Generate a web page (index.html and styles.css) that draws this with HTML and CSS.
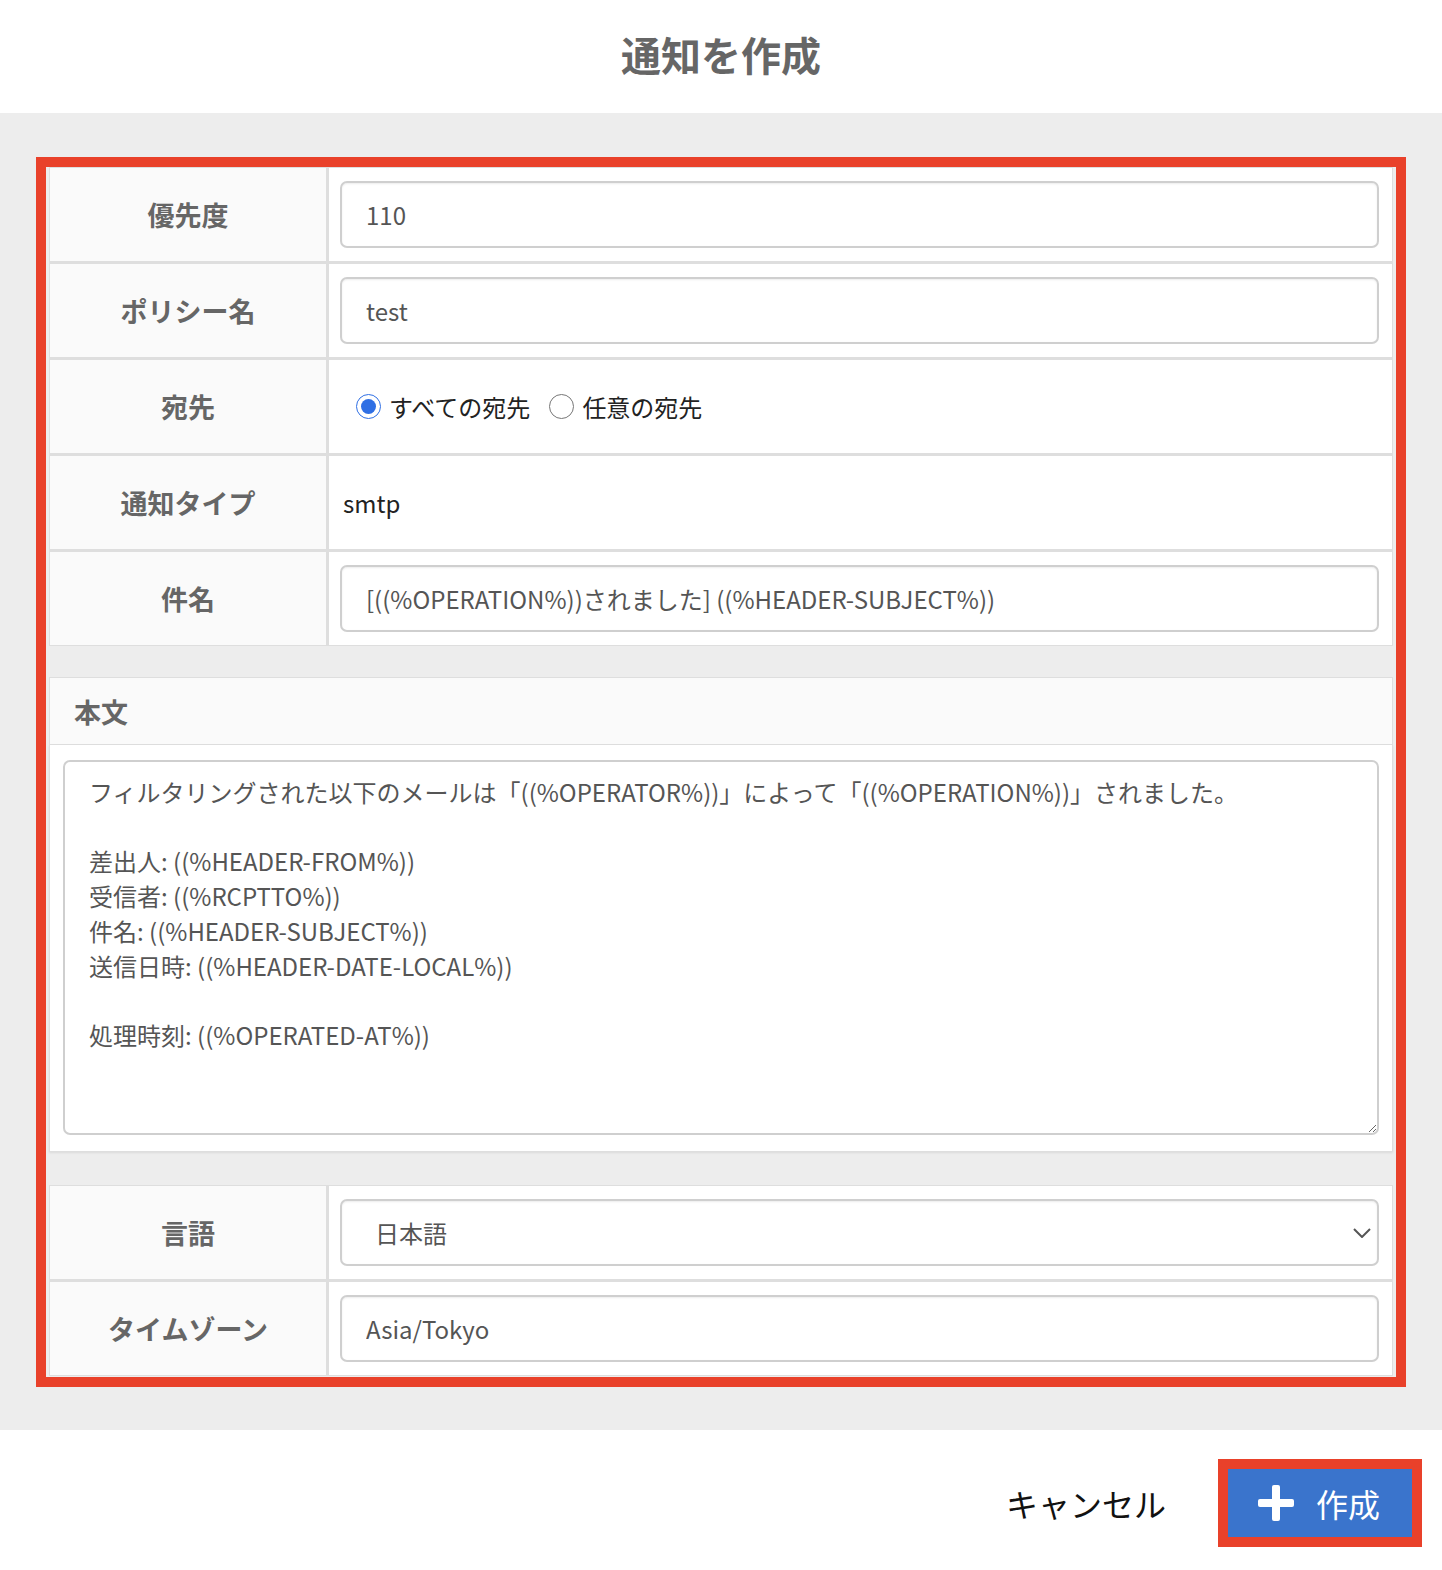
FILE: index.html
```html
<!DOCTYPE html>
<html lang="ja">
<head>
    <meta charset="UTF-8">
    <meta name="viewport" content="width=device-width, initial-scale=1.0">
    <title>通知を作成</title>
    <link rel="stylesheet" href="styles.css">
</head>
<body>
    <header class="top">
        <h1>通知を作成</h1>
    </header>

    <main class="sheet">
        <div class="frame">
            <div class="grid">
                <div class="label">優先度</div>
                <div class="value"><input class="field" type="text" value="110"></div>

                <div class="label">ポリシー名</div>
                <div class="value"><input class="field" type="text" value="test"></div>

                <div class="label">宛先</div>
                <div class="value">
                    <div class="radios">
                        <label class="radio"><input type="radio" name="dest" checked> すべての宛先</label>
                        <label class="radio"><input type="radio" name="dest"> 任意の宛先</label>
                    </div>
                </div>

                <div class="label">通知タイプ</div>
                <div class="value"><span class="plain">smtp</span></div>

                <div class="label">件名</div>
                <div class="value"><input class="field" type="text" value="[((%OPERATION%))されました] ((%HEADER-SUBJECT%))"></div>
            </div>

            <div class="body-head">本文</div>
            <div class="body-main">
                <textarea class="text">フィルタリングされた以下のメールは「((%OPERATOR%))」によって「((%OPERATION%))」されました。

差出人: ((%HEADER-FROM%))
受信者: ((%RCPTTO%))
件名: ((%HEADER-SUBJECT%))
送信日時: ((%HEADER-DATE-LOCAL%))

処理時刻: ((%OPERATED-AT%))</textarea>
            </div>

            <div class="grid">
                <div class="label">言語</div>
                <div class="value">
                    <div class="select-wrap">
                        <select class="field select">
                            <option>日本語</option>
                            <option>English</option>
                        </select>
                        <svg class="chevron" width="18" height="10" viewBox="0 0 18 10">
                            <path d="M1 1 L9 9 L17 1" fill="none" stroke="#555" stroke-width="2"/>
                        </svg>
                    </div>
                </div>

                <div class="label">タイムゾーン</div>
                <div class="value"><input class="field" type="text" value="Asia/Tokyo"></div>
            </div>
        </div>
    </main>

    <footer class="actions">
        <a class="cancel" href="#">キャンセル</a>
        <div class="btn-frame">
            <button class="btn" type="button">
                <svg width="36" height="36" viewBox="0 0 36 36">
                    <rect x="14" y="0" width="8" height="36" rx="2" fill="#fff"/>
                    <rect x="0" y="14" width="36" height="8" rx="2" fill="#fff"/>
                </svg>
                作成
            </button>
        </div>
    </footer>
</body>
</html>
```

FILE: styles.css
```css
body{
    margin: 0;
    background: #fff;
    font-family: "Noto Sans CJK JP", "Noto Sans", sans-serif;
    color: #222;
}

.top{
    height: 113px;
    display: flex;
    align-items: center;
    justify-content: center;
    padding-bottom: 6px;
    box-sizing: border-box;
}

h1{
    margin: 0;
    font-size: 40px;
    font-weight: bold;
    color: #666;
}

.sheet{
    background: #ededed;
    padding: 44px 36px 43px;
}

.frame{
    border: 10px solid #e9412a;
    padding: 0 3px 1px;
}

.grid{
    display: grid;
    grid-template-columns: 276px 1fr;
    grid-auto-rows: 93px;
    gap: 3px;
    padding: 1px;
    background: #dedede;
}

.label{
    background: #fafafa;
    display: flex;
    align-items: center;
    justify-content: center;
    font-size: 27px;
    font-weight: bold;
    color: #666;
}

.value{
    background: #fff;
    display: flex;
    align-items: center;
    padding: 0 13px 0 11px;
}

.field{
    width: 100%;
    height: 67px;
    box-sizing: border-box;
    border: 2px solid #cfcfcf;
    border-radius: 7px;
    box-shadow: inset 0 1px 2px rgba(0, 0, 0, 0.08);
    padding: 0 24px;
    font-family: inherit;
    font-size: 24px;
    color: #555;
    background: #fff;
}

.plain{
    font-size: 24px;
    color: #222;
    padding-left: 3px;
}

.radios{
    display: flex;
    gap: 19px;
    padding-left: 16px;
}

.radio{
    display: flex;
    align-items: center;
    gap: 8px;
    font-size: 24px;
    color: #222;
}

.radio input{
    width: 25px;
    height: 25px;
    margin: 0;
    accent-color: #2f6fe4;
}

.body-head{
    margin-top: 31px;
    height: 68px;
    box-sizing: border-box;
    border: 1px solid #dedede;
    background: #fafafa;
    display: flex;
    align-items: center;
    padding-left: 24px;
    font-size: 27px;
    font-weight: bold;
    color: #666;
}

.body-main{
    background: #fff;
    border: 1px solid #dedede;
    border-top: none;
    padding: 15px 13px 16px 13px;
    margin-bottom: 33px;
    box-shadow: 0 1px 2px rgba(0, 0, 0, 0.08);
}

.text{
    display: block;
    width: 100%;
    height: 375px;
    box-sizing: border-box;
    border: 2px solid #cfcfcf;
    border-radius: 7px;
    padding: 13px 24px;
    font-family: inherit;
    font-size: 24px;
    line-height: 34.7px;
    color: #555;
}

.select-wrap{
    position: relative;
    width: 100%;
}

.select{
    appearance: none;
    padding-left: 33px;
}

.chevron{
    position: absolute;
    right: 8px;
    top: 29px;
}

.actions{
    height: 142px;
    display: flex;
    align-items: center;
    justify-content: flex-end;
    gap: 52px;
    padding-right: 20px;
    padding-top: 3px;
    box-sizing: border-box;
}

.cancel{
    font-size: 32px;
    color: #111;
    text-decoration: none;
}

.btn-frame{
    border: 10px solid #e9412a;
}

.btn{
    width: 184px;
    height: 68px;
    border: none;
    background: #3a74cc;
    color: #fff;
    font-family: inherit;
    font-size: 32px;
    display: flex;
    align-items: center;
    gap: 22px;
    padding: 0 0 0 30px;
    cursor: pointer;
}
```
